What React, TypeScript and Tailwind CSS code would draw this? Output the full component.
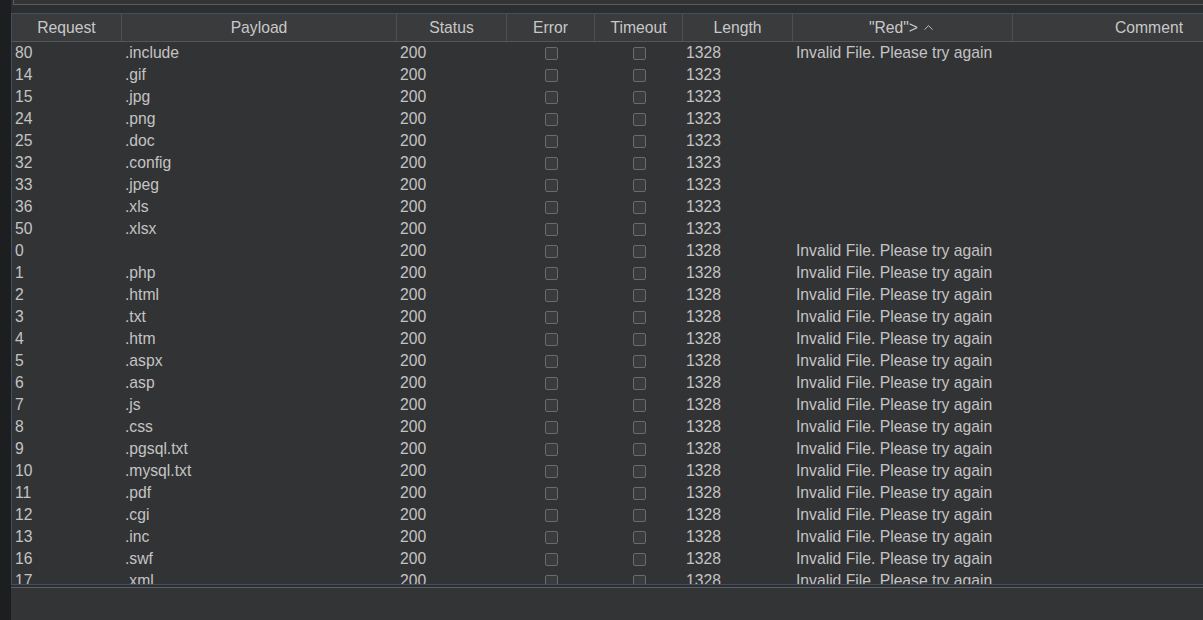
import { ChevronUp } from 'lucide-react'

const cols = [
  { key: 'req', label: 'Request', w: 'w-[110px]' },
  { key: 'payload', label: 'Payload', w: 'w-[275px]' },
  { key: 'status', label: 'Status', w: 'w-[110px]' },
  { key: 'error', label: 'Error', w: 'w-[88px]' },
  { key: 'timeout', label: 'Timeout', w: 'w-[88px]' },
  { key: 'length', label: 'Length', w: 'w-[110px]' },
  { key: 'red', label: '"Red">', w: 'w-[220px]' },
  { key: 'comment', label: 'Comment', w: 'flex-1' },
]

const MSG = 'Invalid File. Please try again'

const rows: [string, string, string, string][] = [
  ['80', '.include', '1328', MSG],
  ['14', '.gif', '1323', ''],
  ['15', '.jpg', '1323', ''],
  ['24', '.png', '1323', ''],
  ['25', '.doc', '1323', ''],
  ['32', '.config', '1323', ''],
  ['33', '.jpeg', '1323', ''],
  ['36', '.xls', '1323', ''],
  ['50', '.xlsx', '1323', ''],
  ['0', '', '1328', MSG],
  ['1', '.php', '1328', MSG],
  ['2', '.html', '1328', MSG],
  ['3', '.txt', '1328', MSG],
  ['4', '.htm', '1328', MSG],
  ['5', '.aspx', '1328', MSG],
  ['6', '.asp', '1328', MSG],
  ['7', '.js', '1328', MSG],
  ['8', '.css', '1328', MSG],
  ['9', '.pgsql.txt', '1328', MSG],
  ['10', '.mysql.txt', '1328', MSG],
  ['11', '.pdf', '1328', MSG],
  ['12', '.cgi', '1328', MSG],
  ['13', '.inc', '1328', MSG],
  ['16', '.swf', '1328', MSG],
  ['17', '.xml', '1328', MSG],
]

function Box() {
  return <div className="w-[13px] h-[13px] rounded-[2px] border border-[#6a6b6c] bg-[#3a3b3d]" />
}

export default function App() {
  return (
    <div
      className="flex h-[620px] w-[1203px] overflow-hidden bg-[#1d1e20] text-[15.7px] text-[#c4c4c4]"
      style={{ fontFamily: '"Liberation Sans", Arial, sans-serif' }}
    >
      {/* left gutter */}
      <div className="w-[11px] shrink-0 bg-[#1d1e20]" />

      <div className="flex flex-1 flex-col bg-[#2d2e30]">
        {/* top panel edge */}
        <div className="h-[13px] shrink-0 pl-[2px]">
          <div className="h-[5px] border-b border-l border-[#5b5c5e] bg-[#333436]" />
        </div>

        {/* results table */}
        <div className="flex h-[572px] shrink-0 flex-col border-t border-b border-l border-[#415065] bg-[#323335]">
          <div className="flex h-[28px] shrink-0 border-b border-[#555658] bg-[#3a3b3d] text-[#c8c8c8]">
            {cols.map((c, i) => (
              <div
                key={c.key}
                className={`${c.w} flex items-center ${
                  c.key === 'comment' ? 'justify-end pr-[20px]' : 'justify-center'
                } ${i < cols.length - 1 ? 'border-r border-[#4e4f51]' : ''} shrink-0`}
              >
                {c.label}
                {c.key === 'red' && <ChevronUp className="ml-[3px] h-[15px] w-[15px]" strokeWidth={1.5} />}
              </div>
            ))}
          </div>

          <div className="flex-1 overflow-hidden">
            {rows.map(([req, payload, len, red]) => (
              <div key={req} className="flex h-[22px] items-center leading-[22px]">
                <div className="w-[110px] shrink-0 pl-[3px]">{req}</div>
                <div className="w-[275px] shrink-0 pl-[3px]">{payload}</div>
                <div className="w-[110px] shrink-0 pl-[3px]">200</div>
                <div className="flex w-[88px] shrink-0 justify-center">
                  <Box />
                </div>
                <div className="flex w-[88px] shrink-0 justify-center">
                  <Box />
                </div>
                <div className="w-[110px] shrink-0 pl-[3px]">{len}</div>
                <div className="w-[220px] shrink-0 pl-[3px] whitespace-nowrap">{red}</div>
                <div className="flex-1" />
              </div>
            ))}
          </div>
        </div>

        {/* splitter + lower panel */}
        <div className="mt-[2px] h-[1px] shrink-0 bg-[#5e5f60]" />
        <div className="flex-1 bg-[#333436]" />
      </div>
    </div>
  )
}
